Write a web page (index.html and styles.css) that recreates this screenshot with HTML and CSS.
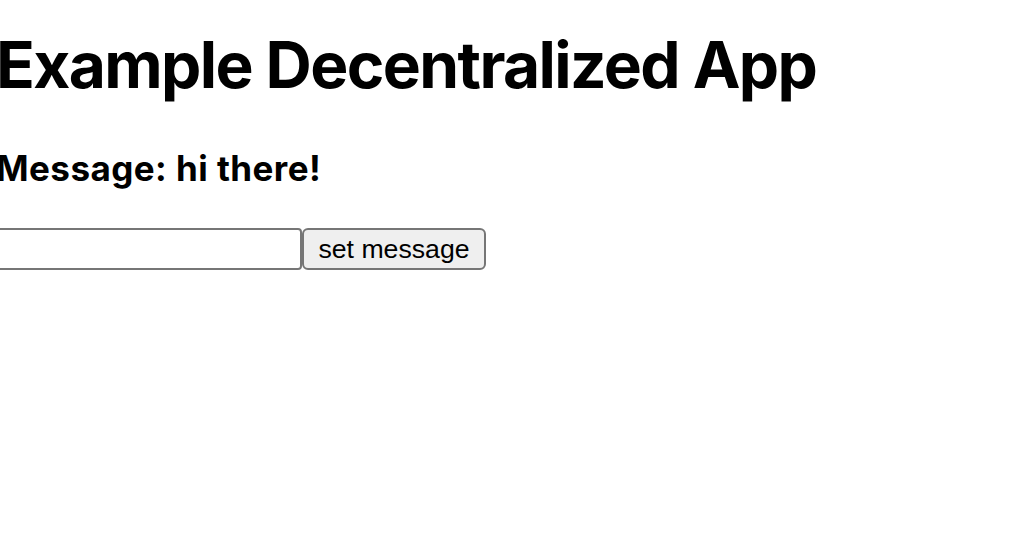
FILE: index.html
```html
<!DOCTYPE html>
<html>
<head>
<meta charset="utf-8">
<link rel="stylesheet" href="styles.css">
<title>Example Decentralized App</title>
</head>
<body>
<div class="app">
  <h1 class="title">Example Decentralized App</h1>
  <h3 class="message">Message: hi there!</h3>
  <div class="form">
    <input class="field" type="text">
    <button class="btn">set message</button>
  </div>
</div>
</body>
</html>
```

FILE: styles.css
```css
html, body {
  margin: 0;
  padding: 0;
  background: #fff;
}
.app {
  margin-left: -4px;
  padding-top: 26px;
  font-family: Inter, "Noto Sans", sans-serif;
  color: #000;
}
.title {
  margin: 0;
  font-size: 64px;
  font-weight: 700;
  line-height: 77px;
  letter-spacing: -1.6px;
}
.message {
  margin: 44px 0 0 0;
  font-size: 35px;
  font-weight: 700;
  line-height: 42px;
  letter-spacing: 0.45px;
}
.form {
  display: flex;
  margin-top: 39px;
  margin-left: -20px;
}
.field {
  box-sizing: border-box;
  width: 326px;
  height: 42px;
  margin: 0;
  border: 2px solid #767676;
  border-radius: 4px;
  background: #fff;
  padding: 2px 4px;
  font-family: "Liberation Sans", Arial, sans-serif;
  font-size: 26.67px;
}
.btn {
  box-sizing: border-box;
  height: 42px;
  width: 184px;
  margin: 0;
  padding: 0 12px;
  border: 2px solid #767676;
  border-radius: 6px;
  background: #efefef;
  color: #000;
  font-family: "Liberation Sans", Arial, sans-serif;
  font-size: 26.67px;
}
```
